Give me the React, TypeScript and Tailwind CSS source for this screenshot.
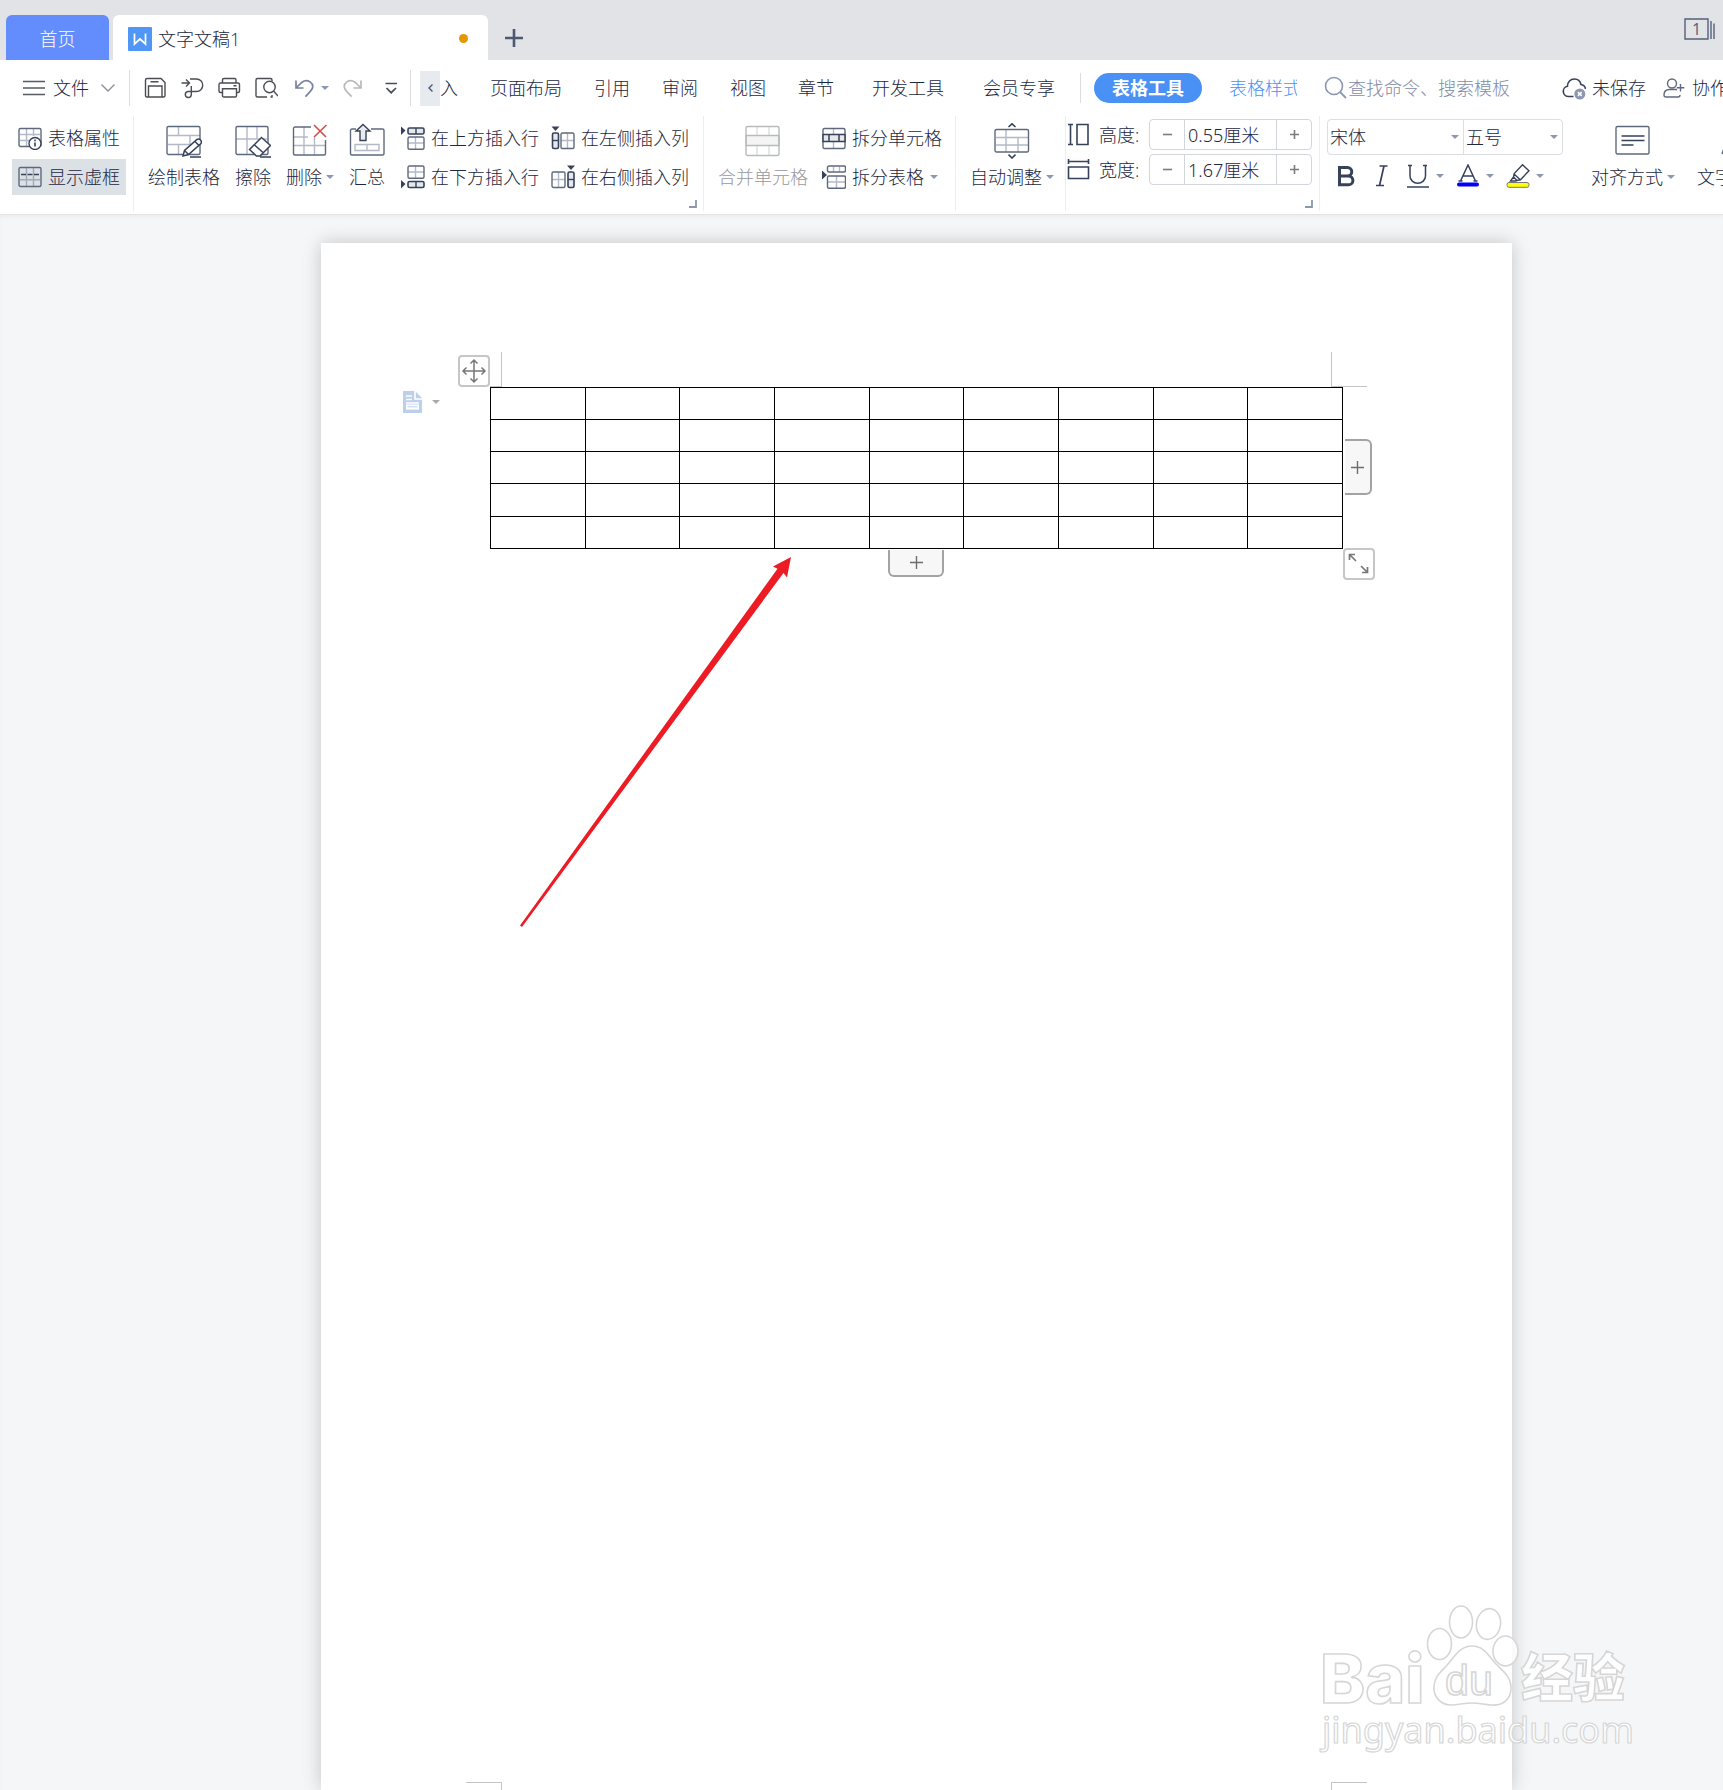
import { useState, type ReactNode } from "react";

const tabs = ["页面布局", "引用", "审阅", "视图", "章节"];
const rows = ["h-8", "h-8", "h-8", "h-[33px]", "h-8"];
const cols = [1, 2, 3, 4, 5, 6, 7, 8, 9];

const DARK = "#36425a";
const MID = "#5f697d";
const LIGHT = "#b4b9c7";

function Small({ children, color = DARK }: { children: ReactNode; color?: string }) {
  return (
    <svg viewBox="0 0 24 24" className="size-6 shrink-0" fill="none" stroke={color} strokeWidth="1.4" aria-hidden="true">
      {children}
    </svg>
  );
}

function Large({ children, color = MID }: { children: ReactNode; color?: string }) {
  return (
    <svg viewBox="0 0 36 36" className="size-9 shrink-0" fill="none" stroke={color} strokeWidth="1.4" aria-hidden="true">
      {children}
    </svg>
  );
}

function Caret() {
  return (
    <svg viewBox="0 0 8 4" className="h-1 w-2 shrink-0" aria-hidden="true">
      <path d="M0 0h8L4 4z" fill="#8b97b3" />
    </svg>
  );
}

function Divider() {
  return <div className="h-[95px] w-px shrink-0 bg-[#eceef1]" />;
}

function BigButton({ icon, label, caret, disabled }: { icon: ReactNode; label: string; caret?: boolean; disabled?: boolean }) {
  return (
    <button disabled={disabled} className="flex shrink-0 flex-col items-center pt-[7px] disabled:text-[#97999f]">
      {icon}
      <span className="mt-1.5 flex items-center gap-1 leading-6">
        {label}
        {caret && <Caret />}
      </span>
    </button>
  );
}

function RowButton({ icon, label, caret, active }: { icon: ReactNode; label: string; caret?: boolean; active?: boolean }) {
  return (
    <button className={active ? "flex h-9 items-center gap-1.5 bg-[#dce1e5] px-1.5" : "flex h-9 items-center gap-1.5 px-1.5"}>
      {icon}
      {label}
      {caret && <Caret />}
    </button>
  );
}

function Launcher() {
  return (
    <button aria-label="更多设置" className="absolute right-1.5 bottom-1.5">
      <svg viewBox="0 0 8 8" className="size-2" fill="none" stroke="#8b97b3" strokeWidth="1.8">
        <path d="M7 0v7H0" />
      </svg>
    </button>
  );
}

function Spinner({ id, label, icon, initial }: { id: string; label: string; icon: ReactNode; initial: number }) {
  const [value, setValue] = useState(initial);
  return (
    <div className="flex h-[31px] items-center">
      {icon}
      <label htmlFor={id} className="ml-2 w-[50px]">{label}:</label>
      <div className="flex h-full w-[163px] rounded-sm border border-[#d3d5dc]">
        <button aria-label={`减小${label}`} onClick={() => setValue(value - 0.01)} className="flex w-[35px] items-center justify-center border-r border-[#d3d5dc]">
          <svg viewBox="0 0 9 9" className="size-[9px]"><path d="M0 4.5h9" stroke="#7c7c7c" strokeWidth="1.6" /></svg>
        </button>
        <input
          id={id}
          value={`${value.toFixed(2)}厘米`}
          readOnly
          className="min-w-0 flex-1 pl-[3px] font-[Noto_Sans,Noto_Sans_CJK_SC,sans-serif] outline-none"
        />
        <button aria-label={`增大${label}`} onClick={() => setValue(value + 0.01)} className="flex w-[35px] items-center justify-center border-l border-[#d3d5dc]">
          <svg viewBox="0 0 9 9" className="size-[9px]"><path d="M0 4.5h9M4.5 0v9" stroke="#7c7c7c" strokeWidth="1.6" /></svg>
        </button>
      </div>
    </div>
  );
}

function TitleBar() {
  return (
    <header className="flex h-[60px] shrink-0 items-end bg-[#e2e3e7] pl-1.5">
      <button className="h-[45px] w-[103px] rounded-t-md bg-[#638dfc] pt-0.5 text-white">首页</button>
      <div className="ml-1 flex h-[45px] w-[375px] items-center rounded-t-md bg-white pt-0.5 pr-5 pl-[15px]">
        <svg viewBox="0 0 24 24" className="size-6" aria-hidden="true">
          <rect width="24" height="24" rx="1" fill="#5097f5" />
          <path d="M6.5 6.500v10.5l5.5-5 5.5 5V6.500" fill="none" stroke="#fff" strokeWidth="1.7" />
        </svg>
        <span className="ml-1.5">文字文稿1</span>
        <span className="ml-auto size-[9px] rounded-full bg-[#e59700]" />
      </div>
      <button aria-label="新建" className="flex h-[45px] w-[52px] items-center justify-center">
        <svg viewBox="0 0 18 18" className="size-[18px]"><path d="M9 0v18M0 9h18" stroke="#4d5872" strokeWidth="2.6" /></svg>
      </button>
      <button aria-label="窗口" className="mr-2 mb-5 ml-auto">
        <svg viewBox="0 0 31 22" className="h-[22px] w-[31px]" fill="none" stroke="#55607c" strokeWidth="1.4">
          <path d="M1 1h23v20H1zM27 3v18M30 5.500v15.500" />
          <text x="12.500" y="16.500" textAnchor="middle" fontSize="16" fontWeight="400" fill="#55607c" stroke="none">1</text>
        </svg>
      </button>
    </header>
  );
}

function QuickTools() {
  return (
    <div className="flex shrink-0 items-center gap-[13px]">
      <button aria-label="保存">
        <Small color="#4a4d52">
          <path d="M4 2.500h14l4 4V19.500a1.500 1.500 0 0 1-1.500 1.500H4a1.500 1.500 0 0 1-1.500-1.500V4A1.500 1.500 0 0 1 4 2.500z" />
          <path d="M5.500 21V10h13.500v11M7.500 5.700h8" />
        </Small>
      </button>
      <button aria-label="输出为PDF">
        <Small color="#4a4d52">
          <path d="M1.500 7h7.500M6 3.500L9.500 7 6 10.500" />
          <path d="M10 3h6.500a6 6 0 0 1 0 12.500H8a3 3 0 1 0 3.300 3V10" />
        </Small>
      </button>
      <button aria-label="打印">
        <Small color="#4a4d52">
          <path d="M5.500 7V4A1.500 1.500 0 0 1 7 2.500h10.500A1.500 1.500 0 0 1 19 4v3" />
          <path d="M5 16.500H3.500A1.500 1.500 0 0 1 2 15V8.500A1.500 1.500 0 0 1 3.500 7H21a1.500 1.500 0 0 1 1.500 1.500V15a1.500 1.500 0 0 1-1.500 1.500h-1.500" />
          <path d="M5.500 12.700h14v7A1.300 1.300 0 0 1 18.200 21H6.800a1.300 1.300 0 0 1-1.300-1.300zM16.500 9.700h3" />
        </Small>
      </button>
      <button aria-label="打印预览">
        <Small color="#4a4d52">
          <path d="M13 21H3.500A1.500 1.500 0 0 1 2 19.500V4a1.500 1.500 0 0 1 1.500-1.500h13a1.500 1.500 0 0 1 1.500 1.500v1.500" />
          <circle cx="15.500" cy="11" r="5.700" />
          <path d="M19.500 15l4.500 5M16.500 21h1.500v-2" />
        </Small>
      </button>
      <button aria-label="撤销" className="flex items-center gap-1.5">
        <Small color="#7683a0">
          <path d="M5 4.500v7.500h7.500M5.500 11.500L11 6.200c5.500-4 12.500 1 10.200 6.500-.5 1.200-1.500 2.500-6.700 8" strokeWidth="1.700" />
        </Small>
        <Caret />
      </button>
      <button aria-label="恢复">
        <Small color="#b9b9b9">
          <path d="M19 4.500v7.500h-7.500M18.500 11.500L13 6.200C7.500 2.200.5 7.200 2.800 12.700c.5 1.200 1.500 2.500 6.700 8" strokeWidth="1.700" />
        </Small>
      </button>
      <button aria-label="自定义快速访问工具栏">
        <Small color="#4a4d52"><path d="M6.500 7.500h11.500M7.500 12l4.700 4.700L17 12" strokeWidth="1.700" /></Small>
      </button>
    </div>
  );
}

function MenuBar() {
  return (
    <nav className="flex h-14 shrink-0 items-center overflow-hidden bg-white whitespace-nowrap">
      <button className="ml-[23px] flex shrink-0 items-center">
        <svg viewBox="0 0 22 16" className="h-4 w-[22px]"><path d="M0 1.500h22M0 8h22M0 14.500h22" stroke="#555a63" strokeWidth="1.500" /></svg>
        <span className="ml-2">文件</span>
        <svg viewBox="0 0 14 8" className="ml-3 h-2 w-3.5" fill="none"><path d="M.5.5L7 7l6.500-6.500" stroke="#8d9098" strokeWidth="1.400" /></svg>
      </button>
      <div className="mr-[13px] ml-3.5 h-9 w-px shrink-0 bg-[#dcdde0]" />
      <QuickTools />
      <div className="ml-[7px] h-9 w-px shrink-0 bg-[#dcdde0]" />
      <button aria-label="向左滚动" className="ml-[9px] flex h-[35px] w-5 shrink-0 items-center justify-center bg-[#e7ebef]">
        <svg viewBox="0 0 5 8" className="h-2 w-[5px]" fill="none"><path d="M4.500.5L1 4l3.500 3.500" stroke="#4d5872" strokeWidth="1.400" /></svg>
      </button>
      <button className="shrink-0">入</button>
      <div className="ml-8 flex shrink-0 items-center gap-8">
        {tabs.map((t) => <button key={t}>{t}</button>)}
      </div>
      <div className="ml-[38px] flex shrink-0 items-center gap-[39px]">
        <button>开发工具</button>
        <button>会员专享</button>
      </div>
      <div className="mr-[13px] ml-[25px] h-[30px] w-px shrink-0 bg-[#dcdde0]" />
      <button className="h-[30px] w-[108px] shrink-0 rounded-full bg-[#4a91f5] font-bold text-white">表格工具</button>
      <button className="ml-[27px] w-[68px] shrink-0 overflow-hidden text-left text-[#4a91f5]">表格样式</button>
      <label className="ml-[27px] flex w-[218px] shrink-0 items-center">
        <Small color="#8b97b3"><circle cx="10" cy="10" r="8.500" strokeWidth="1.600" /><path d="M16 16l6 6" strokeWidth="1.800" /></Small>
        <input type="search" aria-label="搜索" placeholder="查找命令、搜索模板" className="min-w-0 flex-1 outline-none placeholder:text-[#7f8ba6]" />
      </label>
      <button className="ml-5 flex shrink-0 items-center gap-1.5">
        <Small>
          <path d="M11.500 20.500H6.500a5.200 5.200 0 0 1-1-10.300C5.500 6 8.500 3 12.300 3c3.500 0 6 2.200 6.700 5.500 2.500.4 4.200 2.200 4.500 4.500" strokeWidth="1.600" />
          <circle cx="17.800" cy="18" r="5.500" fill="#8b97b3" stroke="none" />
          <path d="M15.900 16.100l3.800 3.800m0-3.800l-3.800 3.800" stroke="#fff" strokeWidth="1.500" />
        </Small>
        未保存
      </button>
      <button className="ml-4 flex shrink-0 items-center gap-1.5">
        <Small color={MID}>
          <circle cx="10" cy="7.500" r="4.500" />
          <path d="M18 19c0 1.500-.7 2-2 2H4c-1.300 0-2-.7-2-2 0-3.500 2.200-5.500 5.500-5.500H15M18.500 8v7.500M14.800 11.800h7.500" />
        </Small>
        协作
      </button>
    </nav>
  );
}

function Ribbon() {
  return (
    <section className="relative z-10 flex h-[98px] shrink-0 overflow-hidden bg-white whitespace-nowrap">
      <div className="flex shrink-0 flex-col gap-[3px] pt-1 pr-[7px] pl-3">
        <RowButton
          label="表格属性"
          icon={
            <Small color={MID}>
              <path d="M2 8.500h20M2 14.500h11M8.500 3v17M15.500 3v7" stroke={LIGHT} />
              <rect x="1" y="2.500" width="22" height="18" rx="1.500" />
              <circle cx="17" cy="17.500" r="6" fill="#fff" stroke={DARK} />
              <path d="M17 16.500v4M17 13.500v1.700" stroke={DARK} strokeWidth="1.600" />
            </Small>
          }
        />
        <RowButton
          active
          label="显示虚框"
          icon={
            <Small color={MID}>
              <path d="M2 14.800h20M8.500 3v18M15.500 3v18" stroke="#a2a9b8" />
              <path d="M3 9.500h18" stroke={DARK} strokeDasharray="5 1.500" strokeWidth="1.600" />
              <rect x="1" y="2.500" width="22" height="19" rx="1.500" />
            </Small>
          }
        />
      </div>
      <Divider />
      <div className="relative flex shrink-0 pr-2 pl-3.5">
        <div className="flex gap-[15px]">
          <BigButton
            label="绘制表格"
            icon={
              <Large>
                <path d="M2 12.500h32M2 21.500h23M12.500 4v8.500M24 12.500v9M12.500 21.500V31" stroke={LIGHT} />
                <rect x="1" y="3.500" width="33" height="28" rx="1.500" />
                <path d="M17 33l1.500-5.500L31 16.500q2-1 3.500.5t.5 3.500L22.500 31.500z" fill="#fff" stroke={DARK} strokeWidth="1.500" />
                <path d="M29 18.500l4 4M18.500 27.500l4 4M24 34h11" stroke={DARK} strokeWidth="1.500" />
              </Large>
            }
          />
          <BigButton
            label="擦除"
            icon={
              <Large>
                <path d="M1 16h31M12 4v27M22 4v12" stroke={LIGHT} />
                <rect x="1" y="3.500" width="32" height="28" rx="1.500" />
                <path d="M26.500 14.500l9 8L25 33h-3.500l-7-6.500z" fill="#fff" stroke={DARK} strokeWidth="1.500" />
                <path d="M19 21.500l9 8M25 34h11" stroke={DARK} strokeWidth="1.500" />
              </Large>
            }
          />
          <BigButton
            caret
            label="删除"
            icon={
              <Large>
                <path d="M2 14h14M2 22.500h31M12 4v28M22.500 14v18" stroke={LIGHT} />
                <path d="M19 4H3a1.500 1.500 0 0 0-1.500 1.500V30.500A1.500 1.500 0 0 0 3 32h29a1.500 1.500 0 0 0 1.500-1.500V17" />
                <path d="M22 2l12 12M34.500 2L22 14" stroke="#cf4d4d" strokeWidth="1.600" />
              </Large>
            }
          />
          <BigButton
            label="汇总"
            icon={
              <Large>
                <path d="M6 21.500h24v6H6zM18 21.500v6" stroke={LIGHT} />
                <path d="M7 6H3a1.500 1.500 0 0 0-1.500 1.500v23A1.500 1.500 0 0 0 3 32h30.500a1.500 1.500 0 0 0 1.500-1.500v-23A1.500 1.500 0 0 0 33.500 6H22" />
                <path d="M14 1.500l7 6.500h-4v9.500h-6V8H7z" fill="#e9ebef" stroke={DARK} />
              </Large>
            }
          />
        </div>
        <div className="ml-2.5 flex flex-col gap-[3px] pt-1">
          <RowButton
            label="在上方插入行"
            icon={
              <Small color={MID}>
                <path d="M14.500 11v12M7 17h16" stroke={LIGHT} />
                <rect x="7" y="11" width="16" height="12.300" rx="1.500" />
                <rect x="7" y="2" width="16" height="6" rx="1.500" fill="#e6e8ec" stroke={DARK} strokeWidth="1.600" />
                <path d="M15 2v6" stroke={DARK} />
                <path d="M0 .5l4.500 4L0 9z" fill={DARK} stroke="none" />
              </Small>
            }
          />
          <RowButton
            label="在下方插入行"
            icon={
              <Small color={MID}>
                <path d="M14.500 1v12M7 7h16" stroke={LIGHT} />
                <rect x="7" y="1" width="16" height="12.300" rx="1.500" />
                <rect x="7" y="16.500" width="16" height="6" rx="1.500" fill="#e6e8ec" stroke={DARK} strokeWidth="1.600" />
                <path d="M15 16.500v6" stroke={DARK} />
                <path d="M0 15l4.500 4L0 23.500z" fill={DARK} stroke="none" />
              </Small>
            }
          />
        </div>
        <div className="flex flex-col gap-[3px] pt-1">
          <RowButton
            label="在左侧插入列"
            icon={
              <Small color={MID}>
                <path d="M16.500 7v15.500M10 14.500h13" stroke={LIGHT} />
                <rect x="10" y="7" width="13" height="15.500" rx="1.500" />
                <rect x="1.500" y="7" width="6" height="15.500" rx="1.500" fill="#e6e8ec" stroke={DARK} strokeWidth="1.600" />
                <path d="M1.500 14.500h6" stroke={DARK} />
                <path d="M.5.500h8L4.500 5z" fill={DARK} stroke="none" />
              </Small>
            }
          />
          <RowButton
            label="在右侧插入列"
            icon={
              <Small color={MID}>
                <path d="M7.500 7v15.500M1 14.500h13" stroke={LIGHT} />
                <rect x="1" y="7" width="13" height="15.500" rx="1.500" />
                <rect x="17" y="7" width="6" height="15.500" rx="1.500" fill="#e6e8ec" stroke={DARK} strokeWidth="1.600" />
                <path d="M17 14.500h6" stroke={DARK} />
                <path d="M16 .500h8L20 5z" fill={DARK} stroke="none" />
              </Small>
            }
          />
        </div>
        <Launcher />
      </div>
      <Divider />
      <div className="flex shrink-0 gap-2 pr-[7px] pl-3.5">
        <BigButton
          disabled
          label="合并单元格"
          icon={
            <Large color="#b9babd">
              <path d="M12 4v8M24 4v8M12 23v9M24 23v9" stroke="#dcdde0" />
              <path d="M1 12.500h33v10H1z" fill="#f4f4f5" />
              <rect x="1" y="3.500" width="33" height="29" rx="1.500" />
            </Large>
          }
        />
        <div className="flex flex-col gap-[3px] pt-1">
          <RowButton
            label="拆分单元格"
            icon={
              <Small color={MID}>
                <path d="M11.500 3v5M11.500 16v6" stroke={LIGHT} />
                <rect x="1" y="2.500" width="22" height="20" rx="1.500" />
                <path d="M1 8.500h22v7H1zM7 8.500v7M17 8.500v7" fill="#e6e8ec" stroke={DARK} strokeWidth="1.500" />
              </Small>
            }
          />
          <RowButton
            caret
            label="拆分表格"
            icon={
              <Small color={MID}>
                <path d="M11.500 1.500v5M17.500 1.500v5M6 17h18M14.500 11v12" stroke={LIGHT} />
                <rect x="5.500" y="1" width="18" height="6" rx="1.500" />
                <rect x="5.500" y="11" width="18" height="12.300" rx="1.500" />
                <path d="M0 5.500l5 4.500-5 4.500z" fill={DARK} stroke="none" />
              </Small>
            }
          />
        </div>
      </div>
      <Divider />
      <div className="shrink-0 pr-[11px] pl-3.5">
        <BigButton
          caret
          label="自动调整"
          icon={
            <Large>
              <path d="M2 14.500h32M2 22h32M12 7v22M24 14.500V29" stroke={LIGHT} />
              <rect x="1" y="6.500" width="33.500" height="22.500" rx="1.500" />
              <path d="M14.500 4L18 .8 21.500 4M14.500 31.700L18 35l3.500-3.300" stroke={DARK} strokeWidth="1.600" />
            </Large>
          }
        />
      </div>
      <Divider />
      <div className="relative flex shrink-0 flex-col gap-1 pt-[3px] pr-[7px] pl-px">
        <Spinner
          id="row-height"
          label="高度"
          initial={0.55}
          icon={<Small><path d="M1 1.500h5M1 21.500h5M3.500 1.500v20M10 1.500h11v20H10z" strokeWidth="1.600" /></Small>}
        />
        <Spinner
          id="col-width"
          label="宽度"
          initial={1.67}
          icon={<Small><path d="M1.500 1v5M21.500 1v5M1.500 3.500h20M1.500 9h20v11.500h-20z" strokeWidth="1.600" /></Small>}
        />
        <Launcher />
      </div>
      <Divider />
      <div className="shrink-0 pt-[3px] pl-[7px]">
        <div className="flex h-9 w-[236px] rounded-sm border border-[#dcdee3]">
          <div className="relative w-[136px] border-r border-[#dcdee3]">
            <select aria-label="字体" className="size-full appearance-none pl-0.5 outline-none">
              <option>宋体</option>
            </select>
            <span className="pointer-events-none absolute inset-y-0 right-1 flex items-center"><Caret /></span>
          </div>
          <div className="relative flex-1">
            <select aria-label="字号" className="size-full appearance-none pl-0.5 outline-none">
              <option>五号</option>
            </select>
            <span className="pointer-events-none absolute inset-y-0 right-1 flex items-center"><Caret /></span>
          </div>
        </div>
        <div className="mt-[5px] flex h-8 items-center gap-3 pl-[7px]">
          <button aria-label="加粗">
            <Small><path d="M5.500 3.500h8a4 4 0 0 1 0 8.500h-8zM5.500 12h9a4.300 4.300 0 0 1 0 8.800h-9z" strokeWidth="3" /></Small>
          </button>
          <button aria-label="倾斜">
            <Small><path d="M9.500 2h8M6 21.500h8M14 2L9.500 21.500" strokeWidth="1.700" /></Small>
          </button>
          <button aria-label="下划线" className="flex items-center gap-1.5">
            <Small><path d="M2 1.500h4M17 1.500h4M4 1.500v10.500a7.500 7 0 0 0 15.500 0V1.500M1 23h22" strokeWidth="1.500" /></Small>
            <Caret />
          </button>
          <button aria-label="字体颜色" className="flex items-center gap-1.5">
            <Small>
              <path d="M4.500 17L12 1l7.500 16M7 12h10M2.500 17h4M17.500 17h4" strokeWidth="1.500" />
              <path d="M3 20.500h18" stroke="#0000ff" strokeWidth="4" strokeLinecap="round" />
            </Small>
            <Caret />
          </button>
          <button aria-label="突出显示" className="flex items-center gap-1.5">
            <Small>
              <path d="M16.500.8l6.500 6-8.500 9-3.500 .7-3.500-3.500.7-3.500zM8 10l6.500 6M7.500 13L4.500 17h5.500l1-1.500" />
              <rect x="1" y="18.500" width="22" height="4.800" rx="2" fill="#ff0" stroke="#777" strokeWidth="1" />
            </Small>
            <Caret />
          </button>
        </div>
      </div>
      <div className="ml-7 flex shrink-0 gap-[22px]">
        <BigButton
          caret
          label="对齐方式"
          icon={
            <Large>
              <rect x="1" y="3.500" width="33" height="27.500" rx="1.500" />
              <path d="M6.500 13h23M6.500 17.500h23M6.500 22h12" stroke={DARK} strokeWidth="1.600" />
            </Large>
          }
        />
        <BigButton
          caret
          label="文字方向"
          icon={<Large><path d="M1 31L9 8l8 23M4 23h10M22 8v20M18 24l4 5 4-5" /></Large>}
        />
      </div>
    </section>
  );
}

function AddButton({ label, className }: { label: string; className: string }) {
  return (
    <button aria-label={label} className={`absolute flex items-center justify-center border-[#a3a3a3] bg-[#f7f7f7] ${className}`}>
      <svg viewBox="0 0 13 13" className="size-[13px]"><path d="M6.500 0v13M0 6.500h13" stroke="#6d6d6d" strokeWidth="1.400" /></svg>
    </button>
  );
}

// Blank sheet with the inserted table, its handles and the margin marks.
function Sheet() {
  return (
    <div className="relative mx-auto min-h-full w-[1191px] flex-1 bg-white pt-36 shadow-[0_0_18px_rgba(0,0,0,0.2)]">
      <div className="relative mx-auto w-[853px]">
        <div className="absolute -top-[35px] left-0 h-[35px] w-3 border-r border-b border-[#c4c4c4]" />
        <div className="absolute -top-[35px] left-[841px] h-[35px] w-9 border-b border-l border-[#c4c4c4]" />
        <table className="w-full table-fixed border-collapse">
          <tbody>
            {rows.map((h, i) => (
              <tr key={i} className={h}>
                {cols.map((c) => <td key={c} className="border border-black p-0" />)}
              </tr>
            ))}
          </tbody>
        </table>
        <button aria-label="移动表格" className="absolute -top-8 -left-8 size-8 rounded-sm border-2 border-[#c6c6c6] bg-white">
          <svg viewBox="0 0 28 28" className="size-7" fill="none" stroke="#777" strokeWidth="1.500">
            <path d="M14 3v22M3 14h22M10.500 6.500L14 3l3.500 3.500M10.500 21.500L14 25l3.500-3.500M6.500 10.500L3 14l3.500 3.500M21.500 10.500L25 14l-3.500 3.500" />
          </svg>
        </button>
        <button aria-label="段落布局" className="absolute top-1 -left-[87px] flex items-center gap-2.5">
          <svg viewBox="0 0 19 22" className="h-[22px] w-[19px]">
            <path d="M0 0h12l7 7v15H0z" fill="#bccfeb" />
            <path d="M12 0v8h7M3 5h6M3 8.500h6M3 12h13M3 17.500h13" stroke="#fff" strokeWidth="1.600" fill="none" />
            <path d="M3 13.500h13v5H3z" fill="#fff" />
            <path d="M4.500 15.800h10" stroke="#bccfeb" />
          </svg>
          <svg viewBox="0 0 8 4" className="h-1 w-2"><path d="M0 0h8L4 4z" fill="#aaa" /></svg>
        </button>
        <AddButton label="添加列" className="top-[52px] left-[855px] h-14 w-[27px] rounded-r-md border-y-2 border-r-2" />
        <AddButton label="添加行" className="top-[163px] left-[398px] h-[27px] w-14 rounded-b-md border-x-2 border-b-2" />
        <button aria-label="缩放表格" className="absolute top-[161px] left-[853px] size-8 rounded-sm border-2 border-[#c6c6c6] bg-white">
          <svg viewBox="0 0 28 28" className="size-7" fill="none" stroke="#777" strokeWidth="1.700">
            <path d="M4.500 10V4.500H10M4.500 4.500l6.500 6.500M22.500 17v5.500H17M22.500 22.500L16 16" />
          </svg>
        </button>
        <svg viewBox="0 0 274 372" className="absolute top-[169px] left-[29px] h-[372px] w-[274px]" aria-hidden="true">
          <path d="M272 1L254 10.500l4.500 2.200L1 369.500l2 1.500L264.500 17l3.500 4.500z" fill="#ed1c24" />
        </svg>
      </div>
      <div className="absolute bottom-0 left-[145px] h-2 w-9 border-t border-r border-[#c4c4c4]" />
      <div className="absolute right-[145px] bottom-0 h-2 w-9 border-t border-l border-[#c4c4c4]" />
    </div>
  );
}

function Watermark() {
  return (
    <svg
      viewBox="0 0 330 160"
      className="pointer-events-none absolute right-[83px] bottom-[30px] h-40 w-[330px] font-[Noto_Sans,Noto_Sans_CJK_SC,sans-serif]"
      fill="#fff"
      fillOpacity="0.85"
      stroke="#d6d6d6"
      strokeWidth="1.600"
      role="img"
      aria-label="Baidu 经验"
    >
      <text x="10" y="103" fontSize="68" fontWeight="800" className="font-[Inter]">Bai</text>
      <ellipse cx="129.500" cy="44" rx="12" ry="15.500" />
      <ellipse cx="151" cy="22" rx="11.500" ry="16" />
      <ellipse cx="178.500" cy="24" rx="12" ry="15.500" transform="rotate(10 178.500 24)" />
      <ellipse cx="195.500" cy="51" rx="12.500" ry="15" />
      <path d="M162 46c13 0 17 11 24 18 8 8 15 13 15 24 0 12-9 18-20 17-7-.5-12-2-19-2-8 0-14 2-21 2-10 0-18-8-17-19 1-11 8-15 14-22 7-8 12-18 24-18z" />
      <text x="135" y="95" fontSize="43" fontWeight="400" className="font-['Liberation_Sans']">du</text>
      <text x="211" y="97" fontSize="52" fontWeight="900">经验</text>
      <text x="12" y="143" fontSize="36" fontWeight="400" strokeWidth="1.200">jingyan.baidu.com</text>
    </svg>
  );
}

export default function App() {
  return (
    <div className="flex min-h-screen flex-col overflow-hidden bg-[#f5f6f8] font-[Open_Sans,Noto_Sans_CJK_SC,sans-serif] text-lg leading-6 font-light text-[#1c2742]">
      <TitleBar />
      <MenuBar />
      <Ribbon />
      <main className="relative flex flex-1 flex-col overflow-hidden border-t border-[#e1e3e5] pt-7 pl-[110px] shadow-[inset_0_3px_3px_rgba(0,0,0,0.03)]">
        <Sheet />
        <Watermark />
      </main>
    </div>
  );
}
